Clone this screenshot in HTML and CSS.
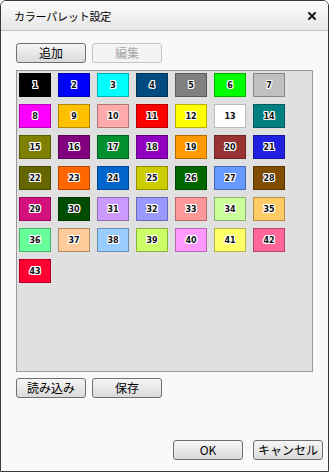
FILE: index.html
```html
<!DOCTYPE html>
<html lang="ja">
<head>
    <meta charset="UTF-8">
    <title>カラーパレット設定</title>
    <link rel="stylesheet" href="styles.css">
</head>
<body>
    <div class="window">
        <div class="titlebar">
            <span class="title">カラーパレット設定</span>
            <svg class="close" width="8" height="8" viewBox="0 0 8 8">
                <path d="M1 1 L7 7 M7 1 L1 7" stroke="#1a1a1a" stroke-width="2" stroke-linecap="square"/>
            </svg>
        </div>
        <div class="content">
            <div class="btn-row">
                <button class="btn">追加</button>
                <button class="btn" disabled>編集</button>
            </div>
            <div class="palette" id="palette"></div>
            <div class="btn-row bottom-row">
                <button class="btn">読み込み</button>
                <button class="btn">保存</button>
            </div>
        </div>
        <div class="footer">
            <button class="btn">OK</button>
            <button class="btn">キャンセル</button>
        </div>
    </div>

    <script>
        const colors = [
            '#000000', '#0000ff', '#00ffff', '#004c80', '#808080', '#00ff00', '#c0c0c0',
            '#ff00ff', '#ffc000', '#ffaaaa', '#ff0000', '#ffff00', '#ffffff', '#008080',
            '#808000', '#800080', '#009030', '#9000c0', '#ff9900', '#993333', '#2020e0',
            '#666600', '#ff6600', '#0066cc', '#cccc00', '#006600', '#6699ff', '#804c00',
            '#d4107c', '#004c00', '#cc99ff', '#9999ff', '#ff9999', '#ccff99', '#ffcc66',
            '#66ff99', '#ffcc99', '#99ccff', '#ccff66', '#ff99ff', '#ffff66', '#ff6699',
            '#ff0033'
        ];

        function darker(hex) {
            const n = parseInt(hex.slice(1), 16);
            let r = (n >> 16) & 255, g = (n >> 8) & 255, b = n & 255;
            if (r + g + b > 740) return '#bbbbbb';
            r = Math.round(r * 0.7); g = Math.round(g * 0.7); b = Math.round(b * 0.7);
            return `rgb(${r}, ${g}, ${b})`;
        }

        const palette = document.getElementById('palette');
        colors.forEach((c, i) => {
            const sw = document.createElement('div');
            sw.className = 'swatch';
            sw.style.background = c;
            sw.style.borderColor = darker(c);
            sw.textContent = i + 1;
            palette.appendChild(sw);
        });
    </script>
</body>
</html>
```

FILE: styles.css
```css
body { margin: 0; font-family: "Noto Sans CJK JP", "Liberation Sans", sans-serif; background: #ffffff; }
.window { width: 329px; height: 472px; box-sizing: border-box; border: 1px solid #3a3a3a; border-radius: 6px 6px 0 0; background: #f8f9f8; display: flex; flex-direction: column; overflow: hidden; }
.titlebar { height: 29px; border-bottom: 1px solid #c4c4c4; background: linear-gradient(#fdfdfd, #e6e6e6); display: flex; align-items: center; justify-content: space-between; padding: 0 12px 0 13px; }
.title { font-size: 11px; color: #000; letter-spacing: -0.2px; }
.close { display: block; }
.content { padding: 12px 15px 0 15px; }
.btn-row { display: flex; gap: 6px; }
.bottom-row { margin-top: 6px; }
.btn { width: 70px; height: 20px; box-sizing: border-box; padding: 0; font-family: "Noto Sans CJK JP", "Liberation Sans", sans-serif; font-size: 12px; line-height: 18px; color: #000; border: 1px solid #707070; border-radius: 3px; background: linear-gradient(#f6f6f6, #dadada); }
.btn:disabled { color: #a8a8a8; border-color: #c4c4c4; background: #f4f4f4; }
.palette { margin-top: 7px; height: 302px; box-sizing: border-box; border: 1px solid #9a9a9a; background: #e0e0e0; padding: 2px; display: grid; grid-template-columns: repeat(7, 32px); grid-auto-rows: 24px; gap: 7px; align-content: start; }
.swatch { box-sizing: border-box; border: 1px solid #000; display: flex; align-items: center; justify-content: center; font-family: "DejaVu Sans", sans-serif; font-size: 8px; font-weight: bold; color: #111; text-shadow: 1px 0 0 #fff, -1px 0 0 #fff, 0 1px 0 #fff, 0 -1px 0 #fff, 1px 1px 0 #fff, -1px -1px 0 #fff, 1px -1px 0 #fff, -1px 1px 0 #fff; }
.footer { margin-top: auto; display: flex; justify-content: flex-end; gap: 10px; padding: 0 5px 11px 0; }
```
